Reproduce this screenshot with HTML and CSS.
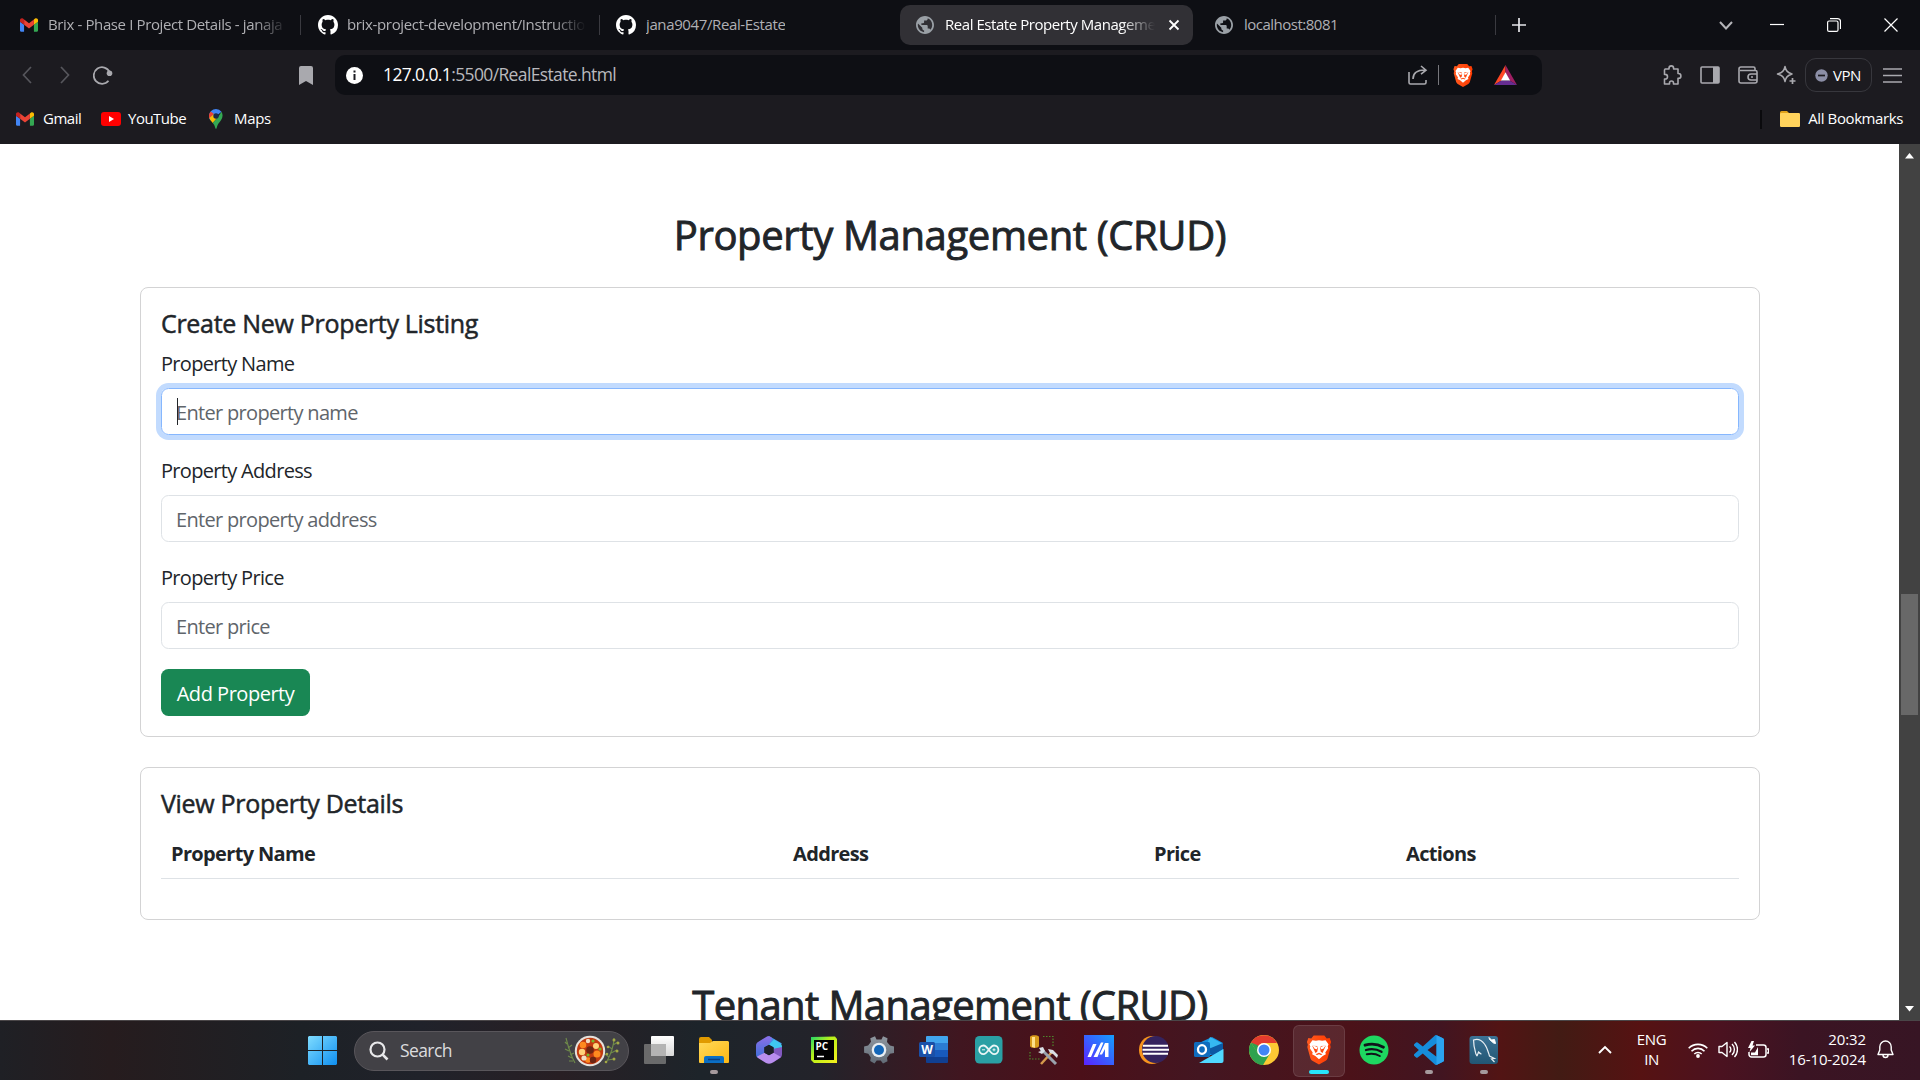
FILE: index.html
```html
<!DOCTYPE html>
<html lang="en">
<head>
<meta charset="utf-8">
<title>Real Estate Property Management</title>
<link rel="stylesheet" href="styles.css">
</head>
<body>
<svg class="defs" width="0" height="0" aria-hidden="true">
  <defs>
    <linearGradient id="g-win" x1="0" y1="0" x2="1" y2="1"><stop offset="0" stop-color="#7fdcff"/><stop offset="1" stop-color="#0f8ff0"/></linearGradient>
    <linearGradient id="g-ma" x1="0" y1="1" x2="1" y2="0"><stop offset="0" stop-color="#5a22ff"/><stop offset="1" stop-color="#14a0ff"/></linearGradient>
    <linearGradient id="g-folder" x1="0" y1="0" x2="1" y2="1"><stop offset="0" stop-color="#ffd95a"/><stop offset="1" stop-color="#fdb813"/></linearGradient>
    <linearGradient id="g-brave" x1="0" y1="0" x2="1" y2="0"><stop offset="0" stop-color="#ff5a1f"/><stop offset="1" stop-color="#ff3a00"/></linearGradient>
    <linearGradient id="g-pc" x1="0" y1="0" x2="1" y2="1"><stop offset="0" stop-color="#1fd76a"/><stop offset=".4" stop-color="#b6f01a"/><stop offset="1" stop-color="#f7f01d"/></linearGradient>
    <linearGradient id="g-gear" x1="0" y1="0" x2="0" y2="1"><stop offset="0" stop-color="#8f979f"/><stop offset="1" stop-color="#616b76"/></linearGradient>
    <linearGradient id="g-sql" x1="0" y1="0" x2="0" y2="1"><stop offset="0" stop-color="#3c7396"/><stop offset="1" stop-color="#225673"/></linearGradient>
    <linearGradient id="g-m1" x1="0" y1="0" x2="0" y2="1"><stop offset="0" stop-color="#8d6fe8"/><stop offset="1" stop-color="#3c6fd8"/></linearGradient>
    <linearGradient id="g-tv" x1="0" y1="0" x2="0" y2="1"><stop offset="0" stop-color="#fff"/><stop offset="1" stop-color="#d8d8d8"/></linearGradient>
    <symbol id="gmail" viewBox="52 42 88 66"><path fill="#4285f4" d="M58 108h14V74L52 59v43c0 3.32 2.69 6 6 6"/><path fill="#34a853" d="M120 108h14c3.32 0 6-2.69 6-6V59l-20 15"/><path fill="#fbbc04" d="M120 48v26l20-15v-8c0-7.42-8.47-11.65-14.4-7.2"/><path fill="#ea4335" d="M72 74V48l24 18 24-18v26L96 92"/><path fill="#c5221f" d="M52 51v8l20 15V48l-5.6-4.2c-5.94-4.45-14.4-.22-14.4 7.2"/></symbol>
    <symbol id="github" viewBox="0 0 16 16"><path fill="#fff" d="M8 0C3.58 0 0 3.58 0 8c0 3.54 2.29 6.53 5.47 7.59.4.07.55-.17.55-.38 0-.19-.01-.82-.01-1.49-2.01.37-2.53-.49-2.69-.94-.09-.23-.48-.94-.82-1.13-.28-.15-.68-.52-.01-.53.63-.01 1.08.58 1.23.82.72 1.21 1.87.87 2.33.66.07-.52.28-.87.51-1.07-1.78-.2-3.64-.89-3.64-3.95 0-.87.31-1.59.82-2.15-.08-.2-.36-1.02.08-2.12 0 0 .67-.21 2.2.82.64-.18 1.32-.27 2-.27.68 0 1.36.09 2 .27 1.53-1.04 2.2-.82 2.2-.82.44 1.1.16 1.92.08 2.12.51.56.82 1.27.82 2.15 0 3.07-1.87 3.75-3.65 3.95.29.25.54.73.54 1.48 0 1.07-.01 1.93-.01 2.2 0 .21.15.46.55.38A8.013 8.013 0 0016 8c0-4.42-3.58-8-8-8z"/></symbol>
    <symbol id="globe" viewBox="2 2 20 20"><path fill="#9aa0a6" d="M12 2C6.48 2 2 6.48 2 12s4.48 10 10 10 10-4.48 10-10S17.52 2 12 2zm-1 17.93c-3.95-.49-7-3.85-7-7.93 0-.62.08-1.21.21-1.79L9 15v1c0 1.1.9 2 2 2v1.93zm6.9-2.54c-.26-.81-1-1.39-1.9-1.39h-1v-3c0-.55-.45-1-1-1H8v-2h2c.55 0 1-.45 1-1V7h2c1.1 0 2-.9 2-2v-.41c2.93 1.19 5 4.06 5 7.41 0 2.08-.8 3.97-2.1 5.39z"/></symbol>
    <symbol id="brave" viewBox="0 0 26 30"><path fill="url(#g-brave)" d="M7.500 0h11L21 3l3-.3 1.500 4-1 2.800.6 2.500-3.200 11.500c-.4 1.200-1 1.800-2 2.500L13 30l-6.900-4c-1-.7-1.600-1.300-2-2.500L.9 12l.6-2.500-1-2.800 1.500-4L5 3z"/><path fill="#fff" d="M13 4.800l3.200.7 3.600-.5 3 4-.8 2.500.5 1.600-3 4.400.6 2-3.300 1.700L13 24.500l-3.800-3.300-3.300-1.700.6-2-3-4.400.5-1.600L3.200 9l3-4 3.600.5z"/><path fill="#ff4a12" d="M6 10.500l5 .3.900 2.200-.7 3.800-1.900 1.200-1-2.200zM20 10.500l-5 .3-.9 2.200.7 3.800 1.900 1.200 1-2.200zM9.500 19.300L13 17.800l3.500 1.500-3.500 2.200z"/><path fill="#fff" d="M6 10l5.500 2-.6 2.300-2.400-.6zM20 10l-5.500 2 .6 2.300 2.400-.6zM10.500 20.500l2.500-1.200 2.500 1.200L13 23z"/></symbol>
  </defs>
</svg>

<header class="browser">
  <div class="tabstrip">
    <div class="tab"><svg class="fav-gmail"><use href="#gmail"/></svg><span class="tab-title fade t1">Brix - Phase I Project Details - janaja</span></div>
    <div class="tab"><svg class="fav"><use href="#github"/></svg><span class="tab-title fade t2">brix-project-development/Instructio</span></div>
    <div class="tab last-before"><svg class="fav"><use href="#github"/></svg><span class="tab-title t3">jana9047/Real-Estate</span></div>
    <div class="tab active"><svg class="fav-globe"><use href="#globe"/></svg><span class="tab-title fade t4">Real Estate Property Manageme</span><svg class="tab-close" viewBox="0 0 12 12"><path d="M1.500 1.500l9 9M10.500 1.500l-9 9" stroke="#fff" stroke-width="1.800"/></svg></div>
    <div class="tab after"><svg class="fav-globe"><use href="#globe"/></svg><span class="tab-title t5">localhost:8081</span></div>
    <svg class="newtab" viewBox="0 0 14 14"><path d="M7 0v14M0 7h14" stroke="#e6e6ea" stroke-width="1.700"/></svg>
    <div class="winctl">
      <svg width="14" height="9" viewBox="0 0 14 9"><path d="M1 1l6 6.500L13 1" fill="none" stroke="#b4b4b8" stroke-width="2"/></svg>
      <svg width="14" height="14" viewBox="0 0 14 14"><path d="M0 6.500h14" stroke="#fff" stroke-width="1.200"/></svg>
      <svg width="14" height="14" viewBox="0 0 14 14"><rect x=".6" y="3" width="10.400" height="10.400" rx="1.500" fill="none" stroke="#fff" stroke-width="1.200"/><path d="M3 .6h7.500a3 3 0 0 1 3 3V11" fill="none" stroke="#fff" stroke-width="1.200"/></svg>
      <svg width="14" height="14" viewBox="0 0 14 14"><path d="M.5.5l13 13M13.500.5l-13 13" stroke="#fff" stroke-width="1.200"/></svg>
    </div>
  </div>

  <div class="toolbar">
    <div class="nav">
      <svg width="10" height="18" viewBox="0 0 10 18"><path d="M9 1L1.500 9 9 17" fill="none" stroke="#56565c" stroke-width="1.700"/></svg>
      <svg width="10" height="18" viewBox="0 0 10 18"><path d="M1 1l7.500 8L1 17" fill="none" stroke="#56565c" stroke-width="1.700"/></svg>
      <svg width="20" height="19" viewBox="0 0 20 19"><path d="M15.500 14.800A8.300 8.300 0 1 1 16.600 6" fill="none" stroke="#a9a9ae" stroke-width="1.800"/><circle cx="16.500" cy="7.300" r="2.800" fill="#a9a9ae"/></svg>
    </div>
    <svg class="bookmark" width="14" height="19" viewBox="0 0 14 19"><path d="M2 0h10a2 2 0 0 1 2 2v17l-7-4-7 4V2a2 2 0 0 1 2-2z" fill="#a9a9ae"/></svg>
    <div class="urlbar">
      <svg width="17" height="17" viewBox="0 0 17 17"><circle cx="8.500" cy="8.500" r="8.500" fill="#fff"/><path d="M7.500 3.500h2v2h-2zM7.500 7h2v6h-2z" fill="#1a1a20"/></svg>
      <span class="url"><b>127.0.0.1</b>:5500/RealEstate.html</span>
      <svg class="share" width="20" height="20" viewBox="0 0 20 20"><path d="M1 7v10.500a1.500 1.500 0 0 0 1.500 1.500h14a1.500 1.500 0 0 0 1.500-1.500V15M5 14c0-6 4-9 12-9M13 1l5 4.200-5 4" fill="none" stroke="#a9a9ae" stroke-width="1.600"/></svg>
      <i class="url-sep"></i>
      <svg class="shield" width="20" height="23"><use href="#brave"/></svg>
      <svg class="bat" width="23" height="20" viewBox="0 0 23 20"><path d="M11.500 0L0 20l7.500-4.500 4-8z" fill="#ff4724"/><path d="M11.500 0L23 20l-7.500-4.500-4-8z" fill="#9e1f63"/><path d="M0 20h23l-7.500-4.500h-8z" fill="#662d91"/><path d="M11.500 7.200l4.600 8.300H6.900z" fill="#fff"/></svg>
    </div>
    <div class="actions">
      <svg width="20" height="20" viewBox="0 0 20 20"><path d="M3 4h4V3.200a2.300 2.300 0 0 1 4.600 0V4H16v4.500h.5a2.400 2.400 0 0 1 0 4.800H16V19h-4.500v-1a2 2 0 0 0-4 0v1H2.500v-5h.7a2.300 2.300 0 0 0 0-4.600H2.500V5z" fill="none" stroke="#a9a9ae" stroke-width="1.600" stroke-linejoin="round"/></svg>
      <svg width="20" height="18" viewBox="0 0 20 18"><rect x="1" y="1" width="18" height="16" rx="1" fill="none" stroke="#a9a9ae" stroke-width="1.600"/><path d="M13 1h6v16h-6z" fill="#a9a9ae"/></svg>
      <svg width="20" height="18" viewBox="0 0 20 18"><path d="M17 4V2.500A1.500 1.500 0 0 0 15.500 1H3a2 2 0 0 0-2 2v12a2 2 0 0 0 2 2h14a2 2 0 0 0 2-2V6a1.500 1.500 0 0 0-1.500-1.500H2M19 8h-6a3 3 0 0 0 0 6h6M13 11h2" fill="none" stroke="#a9a9ae" stroke-width="1.600"/></svg>
      <svg width="20" height="20" viewBox="0 0 20 20"><path d="M9 1.500c1 4.500 2.500 6 7 7.500-4.500 1.500-6 3-7 7.500C8 12 6.500 10.500 1.500 9 6.500 7.500 8 6 9 1.500z" fill="none" stroke="#a9a9ae" stroke-width="1.500" stroke-linejoin="round"/><path d="M16.500 13v6M13.500 16h6" stroke="#a9a9ae" stroke-width="1.700"/></svg>
      <div class="vpn"><svg width="13" height="13" viewBox="0 0 13 13"><circle cx="6.500" cy="6.500" r="6.200" fill="#8b8ea6"/><path d="M3 6.500h7" stroke="#1c1b20" stroke-width="1.700"/></svg><span>VPN</span></div>
      <svg class="burger" width="19" height="15" viewBox="0 0 19 15"><path d="M0 1h19M0 7.500h19M0 14h19" stroke="#a9a9ae" stroke-width="1.500"/></svg>
    </div>
  </div>

  <div class="bookmarks">
    <a class="bm b1"><svg width="18" height="14"><use href="#gmail"/></svg><span>Gmail</span></a>
    <a class="bm b2"><svg width="20" height="14" viewBox="0 0 20 14"><rect width="20" height="14" rx="3" fill="#f00"/><path d="M8 4l5 3-5 3z" fill="#fff"/></svg><span>YouTube</span></a>
    <a class="bm b3"><svg width="14" height="20" viewBox="0 0 14 20"><path d="M7 0a7 7 0 0 0-7 7c0 1.700.6 3.200 1.500 4.500L12.500 2.700A7 7 0 0 0 7 0z" fill="#4285f4"/><path d="M1.700 2.500A7 7 0 0 0 .4 9.500L5 5z" fill="#ea4335"/><path d="M.4 9c.6 1.700 2 3.300 3.300 5L9 8 5.500 4.800z" fill="#fbbc04"/><path d="M12.500 2.700C15.500 8 11.500 12 9.500 14.500 8 16.500 7.800 20 7 20s-1-3.800-3.300-6l5-5.500z" fill="#34a853"/><circle cx="7" cy="7" r="2.700" fill="#1c2b48"/></svg><span>Maps</span></a>
    <div class="allbm"><i></i><svg width="20" height="16" viewBox="0 0 20 16"><path d="M0 1.500A1.500 1.500 0 0 1 1.500 0H7l2 2v3H0z" fill="#e0a21a"/><rect y="2" width="20" height="14" rx="1.200" fill="#ffd35c"/></svg><span>All Bookmarks</span></div>
  </div>
</header>

<div class="viewport">
  <main class="page">
    <h2 class="heading">Property Management (CRUD)</h2>
    <section class="card">
      <h5>Create New Property Listing</h5>
      <form>
        <label>Property Name</label>
        <div class="control focused"><i class="caret"></i><span>Enter property name</span></div>
        <label>Property Address</label>
        <div class="control"><span>Enter property address</span></div>
        <label>Property Price</label>
        <div class="control"><span>Enter price</span></div>
        <div class="btn">Add Property</div>
      </form>
    </section>
    <section class="card">
      <h5>View Property Details</h5>
      <table>
        <colgroup><col class="c1"><col class="c2"><col class="c3"><col class="c4"></colgroup>
        <thead><tr><th>Property Name</th><th>Address</th><th>Price</th><th>Actions</th></tr></thead>
      </table>
    </section>
    <h2 class="heading next">Tenant Management (CRUD)</h2>
  </main>
  <div class="scrollbar">
    <svg width="9" height="6" viewBox="0 0 9 6"><path d="M4.500 0L9 5.500H0z" fill="#fff"/></svg>
    <i class="thumb"></i>
    <svg width="9" height="6" viewBox="0 0 9 6"><path d="M4.500 5.500L9 0H0z" fill="#fff"/></svg>
  </div>
</div>

<footer class="taskbar">
  <svg class="start" width="29" height="29" viewBox="0 0 29 29"><path d="M1 0h13v14H0V1zM15 0h13l1 1v13H15zM0 15h14v14H1l-1-1zM15 15h14v13l-1 1H15z" fill="url(#g-win)"/></svg>
  <div class="search">
    <svg width="20" height="20" viewBox="0 0 20 20"><circle cx="8.500" cy="8.500" r="7" fill="none" stroke="#e8e8ea" stroke-width="2.200"/><path d="M13.700 13.700l4.800 4.800" stroke="#e8e8ea" stroke-width="2.600"/></svg>
    <span>Search</span>
    <svg class="food" width="56" height="32" viewBox="0 0 56 32">
      <g fill="none" stroke="#6f8a4a" stroke-width="1.100"><path d="M2 3c2 8 4 16 9 25M3 9l-2-2M4 13l4-3M5 16l-4-2M6 20l4-2M8 23l-4-2M9 26l-4 0"/><path d="M50 3c0 8-3 16-8 25M49 10l5-3M48 14l-4-3M47 18l6-3M45 22l-4-3M44 25l6-1"/></g>
      <g fill="#a3a944"><circle cx="50" cy="5" r="1.500"/><circle cx="54" cy="8" r="1.500"/><circle cx="44" cy="12" r="1.300"/><circle cx="53" cy="16" r="1.500"/><circle cx="43" cy="19" r="1.300"/><circle cx="50" cy="24" r="1.500"/><circle cx="42" cy="27" r="1.300"/></g>
      <circle cx="26" cy="16" r="15.200" fill="#e6e2dc"/><circle cx="26" cy="16" r="13.200" fill="#c23a10"/>
      <g fill="#ff8a1f"><circle cx="19" cy="10" r="3.300"/><circle cx="33" cy="19" r="3.500"/><circle cx="24" cy="25" r="2.800"/></g>
      <g fill="#ffd27a"><circle cx="32" cy="11" r="3"/><circle cx="18" cy="17" r="3.200"/></g>
      <g fill="#6d2512"><circle cx="26" cy="15" r="3.800"/><circle cx="29" cy="25" r="3.200"/></g>
      <g fill="#f1dfc4"><circle cx="24" cy="6" r="2.200"/><circle cx="20" cy="23" r="2.600"/></g>
      <g fill="#78b92b"><circle cx="29" cy="6" r="1.600"/><circle cx="36" cy="14" r="1.600"/><circle cx="24" cy="20" r="1.500"/></g>
    </svg>
  </div>
  <div class="apps">
    <div class="app"><svg viewBox="0 0 30 30"><rect x="7" y="1" width="23" height="20" rx="1" fill="url(#g-tv)"/><rect y="9" width="22" height="20" rx="1" fill="#777" fill-opacity=".85"/><rect x="7" y="9" width="15" height="12" fill="#b4b4b4"/></svg></div>
    <div class="app run"><svg viewBox="0 0 30 30"><path d="M0 4a2 2 0 0 1 2-2h8l3 3v6H0z" fill="#e09a00"/><path d="M0 8h11l3-2h15l1 1v20a1 1 0 0 1-1 1H1a1 1 0 0 1-1-1z" fill="url(#g-folder)"/><path d="M5 28v-5a2 2 0 0 1 2-2h16a2 2 0 0 1 2 2v5z" fill="#0b6fc4"/><path d="M9 24.500h12" stroke="#0a3f80" stroke-width="1.500"/></svg></div>
    <div class="app"><svg viewBox="0 0 30 30"><path d="M15 1L28 8.500 20 13l-5-3.300-4.600 2.600L8 6z" fill="#4a8fe8"/><path d="M20 4.500L26 8c1.500 1 2 2 2 4v7.500l-8.400-4v-3.200L15 9.700z" fill="#3fc8f0"/><path d="M28 12v7c0 2-.6 3-2 4l-7 4.500-4-7.200 4.600-2.600v-4z" fill="#8259c0"/><path d="M13 1.500L4 7C2.500 8 2 9 2 11v8c0 2 .6 3 2 4l6.400-5.300v-5.400L15 9.700 18 3c-1.600-1.500-3.400-2.300-5-1.500z" fill="url(#g-m1)"/><path d="M3 21.500l7.400-3.800 4.600 2.600 4.600-2.600L27 22l-9 6c-2 1-4 1-6 0l-8-5z" fill="#b98eee"/><path d="M15 9.700l4.600 2.600v5.400L15 20.300l-4.600-2.600v-5.400z" fill="#1d2129"/></svg></div>
    <div class="app"><svg viewBox="0 0 30 30"><path d="M2 2l24-.5L28 4v24L5 28l-3-3z" fill="url(#g-pc)"/><rect x="5" y="5" width="20" height="20" fill="#000"/><text x="6.500" y="15" class="pc-text">PC</text><path d="M8 21.500h7" stroke="#fff" stroke-width="1.500"/></svg></div>
    <div class="app"><svg viewBox="0 0 30 30"><path d="M11 1.200l1.500 3.300h5L19 1.200l4.500 2L23 7l3 3.600 4 .8v6.500l-4 .8-3 4 .5 3.600-4.500 2.200-2.300-3h-4L10.500 28.500 6.200 26l.6-3.600-2.500-3.700-4.200-1V11.500l4-1L7 6.800 6.300 3.300z" fill="url(#g-gear)"/><circle cx="15" cy="15" r="7.300" fill="#e8eef2"/><circle cx="15" cy="15" r="5" fill="#1266b8"/></svg></div>
    <div class="app"><svg viewBox="0 0 30 30"><path d="M7 2a1 1 0 0 1 1-1h20a1 1 0 0 1 1 1v6H7z" fill="#41a5ee"/><path d="M7 8h22v7H7z" fill="#2b7cd3"/><path d="M7 15h22v7H7z" fill="#185abd"/><path d="M7 22h22v5a1 1 0 0 1-1 1H8a1 1 0 0 1-1-1z" fill="#103f91"/><rect y="7" width="16" height="15" rx="1.500" fill="#1a50a8"/><text x="2.200" y="19" class="w-text">W</text></svg></div>
    <div class="app"><svg viewBox="0 0 30 30"><rect x="1" y="1" width="27.500" height="27.500" rx="4.500" fill="#2aa0a4"/><g fill="none" stroke="#eaf6f6" stroke-width="1.800"><path d="M14.800 14.800C12.500 11.500 11.500 10.500 9.500 10.500a4.300 4.300 0 0 0 0 8.600c2 0 3-1 5.300-4.300s3.300-4.300 5.300-4.300a4.300 4.300 0 0 1 0 8.600c-2 0-3-1-5.300-4.300z"/></g><path d="M8 14.800h3M18.500 14.800h3M20 13.300v3" stroke="#eaf6f6"/></svg></div>
    <div class="app"><svg viewBox="0 0 30 30"><path d="M1 2c0-2.500 9-2.500 9 0v9c0 2.500-9 2.500-9 0z" fill="#d99b1c"/><path d="M3 2v10l3 .7V2z" fill="#ffe08a"/><path d="M14 1.500h10V11M1 17v7h10" fill="none" stroke="#4d8a2c" stroke-width="1.200" stroke-dasharray="1.500 1.500"/><path d="M12 29l11-12" stroke="#d69a4c" stroke-width="2.500"/><path d="M12 14l15 15" stroke="#9aa3ad" stroke-width="3"/><path d="M19 14l5 1 5 5-1 3-4-4-3-1zM10 13l4-1 2 4-3 3-4-2 3-1z" fill="#d9dfe5"/></svg></div>
    <div class="app"><svg viewBox="0 0 30 30"><rect width="30" height="30" fill="url(#g-ma)"/><path d="M3.500 22L9 9h3.500L7 22zM9.500 22L17 7.500h2.500L13.500 22zM15.500 19.500L21 8h3.500v14H21v-8l-3 5.500z" fill="#fff"/></svg></div>
    <div class="app"><svg viewBox="0 0 30 30"><ellipse cx="13" cy="15" rx="13" ry="14" fill="#f7941e"/><circle cx="16.500" cy="14.500" r="13.500" fill="#35235e"/><path d="M4 10.800h25M3.500 14.800h26.500M4 18.800h25" stroke="#fff" stroke-width="2"/></svg></div>
    <div class="app"><svg viewBox="0 0 30 30"><path d="M5 8l13-6 11 6v12H5z" fill="#1490df"/><path d="M16 2l13 7-7 6-10-4z" fill="#35b8f1"/><path d="M12 15l17-7v6l-10 7z" fill="#0c59a4"/><path d="M5 28l24.500-14v12a2 2 0 0 1-2 2z" fill="#50d9ff"/><rect y="7" width="16" height="15" rx="1.500" fill="#0f6cbd"/><ellipse cx="8" cy="14.500" rx="4" ry="4.300" fill="none" stroke="#fff" stroke-width="2.300"/></svg></div>
    <div class="app"><svg viewBox="0 0 30 30"><circle cx="15" cy="15" r="15" fill="#fcc934"/><path d="M2 7.500A15 15 0 0 0 14 30l7-11.500H9z" fill="#2ea24e"/><path d="M2 7.500A15 15 0 0 1 28 8H15c-4 0-6.500 3-7 6.500z" fill="#e33b2e"/><path d="M2 7.500L9 19l4-5-5-4z" fill="#2ea24e"/><circle cx="15" cy="15" r="7" fill="#fff"/><circle cx="15" cy="15" r="5.500" fill="#4285f4"/></svg></div>
    <div class="app current"><svg viewBox="0 0 26 31"><use href="#brave"/></svg></div>
    <div class="app"><svg viewBox="0 0 30 30"><circle cx="15" cy="15" r="14.500" fill="#1ed760"/><g fill="none" stroke="#10131a" stroke-linecap="round"><path d="M6 10.200c6-1.700 13-1 18.500 2" stroke-width="2.800"/><path d="M7 15c5.500-1.500 11-.8 15.500 1.800" stroke-width="2.300"/><path d="M7.800 19.300c4.500-1 9-.6 13 1.700" stroke-width="2"/></g></svg></div>
    <div class="app run"><svg viewBox="0 0 24 24"><path fill="#168ddb" d="M23.150 2.587L18.210.21a1.494 1.494 0 0 0-1.705.29l-9.460 8.630-4.120-3.128a.999.999 0 0 0-1.276.057L.327 7.261A1 1 0 0 0 .326 8.740L3.899 12 .326 15.260a1 1 0 0 0 .001 1.479L1.650 17.940a.999.999 0 0 0 1.276.057l4.120-3.128 9.460 8.630a1.492 1.492 0 0 0 1.704.290l4.942-2.377A1.500 1.500 0 0 0 24 20.060V3.939a1.500 1.500 0 0 0-.850-1.352zm-5.146 14.861L10.826 12l7.178-5.448v10.896z"/><path d="M18 .1l5.200 2.500a1.500 1.500 0 0 1 .8 1.300v16.200a1.500 1.500 0 0 1-.8 1.300L18 23.900z" fill="#2ba4f0"/></svg></div>
    <div class="app run"><svg viewBox="0 0 30 30"><rect x=".5" y="1" width="28.500" height="28" rx="3" fill="url(#g-sql)"/><path d="M8 21c-2-2-1.500-5-2.500-8S5 7 4.500 5c4-1.500 8 0 11 4s4 9 5 12l5 2.500-3 .5 3 3M8 21l1.500-4c1 1 2 2 3 2" fill="none" stroke="#e8eef2" stroke-width="1.200"/><path d="M20 2.500l2.500 2.500 3-.5 1 4-2-.5-4-3.500z" fill="#fff" stroke="#fff"/></svg></div>
  </div>
  <div class="tray">
    <svg class="chev" width="14" height="9" viewBox="0 0 14 9"><path d="M1 8l6-6 6 6" fill="none" stroke="#fff" stroke-width="1.900"/></svg>
    <div class="lang"><span>ENG</span><span>IN</span></div>
    <svg width="20" height="16" viewBox="0 0 20 16"><g fill="none" stroke="#fff" stroke-width="1.600"><path d="M.7 6.300a13 13 0 0 1 18.600 0M3.500 9.200a9 9 0 0 1 13 0M6.300 12a5.300 5.300 0 0 1 7.400 0"/></g><circle cx="10" cy="14" r="1.900" fill="#fff"/></svg>
    <svg class="spk" width="20" height="17" viewBox="0 0 20 17"><path d="M1 5.500h3L9 1.500v14l-5-4H1z" fill="none" stroke="#fff" stroke-width="1.400" stroke-linejoin="round"/><path d="M11.500 5.500a4 4 0 0 1 0 6M14 3a7.500 7.500 0 0 1 0 11M16.500 1a11 11 0 0 1 0 15" fill="none" stroke="#fff" stroke-width="1.400"/></svg>
    <svg class="batt" width="21" height="18" viewBox="0 0 21 18"><path d="M8 4h7.500a2.500 2.500 0 0 1 2.500 2.500v7a2.500 2.500 0 0 1-2.500 2.500h-12A2.500 2.500 0 0 1 1 13.500V11M19 8h1.500v4H19" fill="none" stroke="#fff" stroke-width="1.500"/><path d="M3 14.200V11.500h4l3-5.500v8.200zM3.500 0L0 7h2.500L1.500 11 7 4.500H4.500L6 0z" fill="#fff"/></svg>
    <div class="clock"><span>20:32</span><span class="date">16-10-2024</span></div>
    <svg class="bell" width="17" height="19" viewBox="0 0 17 19"><path d="M8.500 1a5.700 5.700 0 0 0-5.700 5.700V10L1 14.500h15L14.200 10V6.700A5.700 5.700 0 0 0 8.500 1zM6 15a2.500 2.500 0 0 0 5 0" fill="none" stroke="#fff" stroke-width="1.400" stroke-linejoin="round"/></svg>
  </div>
</footer>
</body>
</html>
```

FILE: styles.css
```css
* { box-sizing: border-box; }
html, body { margin: 0; height: 100%; overflow: hidden; }
body {
  display: flex; flex-direction: column;
  width: 1920px; height: 1080px;
  font-family: "Open Sans", "Noto Sans", sans-serif;
  font-size: 20px; line-height: 1.5; color: #212529; background: #fff;
}
svg { display: block; flex: none; }
.defs { position: absolute; }
span { white-space: nowrap; }

/* browser chrome */
.browser { flex: none; height: 144px; background: #1c1b20; color: #fff; font-size: 15px; line-height: 20px; }
.browser span { padding-bottom: 2px; }
.tabstrip { display: flex; align-items: center; height: 50px; background: #0e0f14; }
.tab { display: flex; align-items: center; width: 299px; height: 20px; padding-left: 17px; border-right: 1px solid #3a3a40; color: #b0b0b4; }
.tab:first-child { width: 301px; padding-left: 20px; }
.tab-title { overflow: hidden; margin-left: 10px; letter-spacing: -.38px; }
.fade { -webkit-mask-image: linear-gradient(90deg, #000 calc(100% - 34px), transparent); mask-image: linear-gradient(90deg, #000 calc(100% - 34px), transparent); }
.fav { width: 20px; height: 20px; }
.fav-gmail { width: 18px; height: 14px; }
.fav-globe { width: 18px; height: 18px; }
.t1 { width: 240px; margin-left: 10px; }
.t2 { width: 239px; margin-left: 9px; letter-spacing: -.35px; }
.t4 { width: 210px; letter-spacing: -.45px; }
.tab.last-before { width: 300px; border: 0; padding-left: 16px; }
.tab.active { width: 293px; height: 40px; border: 0; border-radius: 10px; background: #313035; color: #fff; padding-left: 16px; }
.tab.active .tab-title { margin-left: 11px; }
.tab-close { width: 12px; height: 12px; margin-left: 13px; }
.tab.after { width: 303px; padding-left: 22px; }
.tab.after .tab-title { margin-left: 11px; letter-spacing: -.5px; }
.newtab { width: 14px; height: 14px; margin-left: 16px; }
.winctl { display: flex; align-items: center; margin-left: auto; padding-right: 22px; gap: 43px; }
.winctl svg:first-child { margin-right: -6px; }

.toolbar { display: flex; align-items: center; height: 50px; }
.nav { display: flex; align-items: center; gap: 28px; padding-left: 22px; }
.nav svg:last-child { margin-left: -5px; }
.bookmark { margin-left: 186px; }
.urlbar { display: flex; align-items: center; width: 1207px; height: 40px; margin-left: 22px; padding-left: 11px; border-radius: 10px; background: #0e0f14; }
.url { margin-left: 20px; font-size: 17.500px; color: #b9b9bd; letter-spacing: -.63px; }
.url b { font-weight: 400; color: #fff; }
.share { margin-left: auto; }
.url-sep { width: 1px; height: 20px; margin-left: 10px; background: #77777c; }
.shield { margin-left: 14px; }
.bat { margin: 0 25px 0 21px; }
.actions { display: flex; align-items: center; gap: 18px; margin-left: auto; padding-right: 18px; }
.vpn { display: flex; align-items: center; gap: 5px; width: 67px; height: 34px; margin-left: -9px; padding-left: 9px; border: 1px solid #37373d; border-radius: 11px; letter-spacing: -.5px; }
.vpn span { padding: 0; }
.burger { margin-left: -7px; }

.bookmarks { display: flex; align-items: center; height: 38px; padding-left: 16px; }
.bm { display: flex; align-items: center; gap: 9px; letter-spacing: -.5px; }
.b1 { width: 85px; }
.b2 { width: 108px; gap: 7px; }
.b3 { gap: 11px; letter-spacing: -.3px; }
.allbm { display: flex; align-items: center; margin-left: auto; padding-right: 17px; letter-spacing: -.4px; }
.allbm i { width: 2px; height: 19px; margin-right: 18px; background: #0a0a0d; }
.allbm svg { margin-right: 8px; }

/* page */
.viewport { display: flex; height: 876px; overflow: hidden; }
.page { width: 1899px; padding: 67px 139px 0 140px; overflow: hidden; }
.heading { margin: 0 0 28px; font-size: 40px; line-height: 48px; font-weight: 400; text-align: center; letter-spacing: -.36px; -webkit-text-stroke: .9px #212529; }
.heading.next { margin-top: 61px; letter-spacing: -.6px; }
.card { margin-bottom: 30px; padding: 20px; border: 1px solid #d3d3d4; border-radius: 8px; }
h5 { margin: 0 0 10px; font-size: 25px; line-height: 30px; font-weight: 400; letter-spacing: -.3px; -webkit-text-stroke: .5px #212529; }
label { display: block; height: 30px; margin-bottom: 10px; padding-top: 1px; letter-spacing: -.68px; }
.control { position: relative; display: flex; align-items: center; height: 47px; margin-bottom: 20px; padding: 3px 15px 0 14px; border: 1px solid #dee2e6; border-radius: 7.500px; color: #5f656b; letter-spacing: -.68px; }
.control.focused { border-color: #86b7fe; box-shadow: 0 0 0 5px #c2dbfe; }
.caret { position: absolute; left: 15px; top: 9px; width: 1px; height: 27px; background: #212529; }
.btn { width: 149px; height: 47px; padding-top: 1px; border-radius: 7.500px; background: #198754; color: #fff; line-height: 47px; text-align: center; letter-spacing: -.48px; }
table { width: 1578px; margin-bottom: 20px; border-collapse: separate; border-spacing: 0; table-layout: fixed; }
.c1 { width: 622px; }
.c2 { width: 361px; }
.c3 { width: 252px; }
th { height: 51px; padding: 11px 10px 9px; border-bottom: 1px solid #dee2e6; text-align: left; font-weight: 700; letter-spacing: -.65px; }
.scrollbar { display: flex; flex-direction: column; align-items: center; width: 21px; padding: 9px 0 8px; background: #424242; }
.thumb { width: 17px; height: 121px; margin: 435px 0 auto; background: #686868; }

/* taskbar */
.taskbar {
  display: flex; align-items: center; height: 60px; border-top: 1px solid #4a4648; color: #fff;
  background: linear-gradient(90deg, #1f2025 0, #261c1e 110px, #1d2126 300px, #20222a 420px, #281f24 560px, #1d242a 700px, #23232a 820px, #401620 960px, #4b1019 1080px, #431621 1200px, #4b1219 1350px, #411521 1440px, #521414 1500px, #421b14 1560px, #561212 1640px, #4b1220 1720px, #3b1423 1800px, #371524 1920px);
}
.start { margin-left: 308px; }
.search { display: flex; align-items: center; width: 275px; height: 40px; margin-left: 17px; padding-left: 14px; border: 1px solid #59565b; border-radius: 20px; background: #424146; font-size: 17.500px; color: #dcdcde; }
.search span { margin-left: 11px; letter-spacing: -.6px; }
.food { margin: 0 8px 0 auto; }
.apps { display: flex; margin: -1px 0 0 2px; }
.app { position: relative; display: flex; align-items: center; justify-content: center; width: 55px; height: 50px; }
.app svg { width: 30px; height: 30px; }
.run::after { content: ""; position: absolute; bottom: 1px; left: 24px; width: 8px; height: 4px; border-radius: 2px; background: #a59a9d; }
.current::before { content: ""; position: absolute; left: 2px; top: 0; width: 50px; height: 50px; border: 1px solid rgba(255,255,255,.1); border-radius: 6px; background: rgba(255,255,255,.09); }
.current svg { position: relative; }
.current::after { content: ""; position: absolute; bottom: 1px; left: 18px; width: 20px; height: 4px; border-radius: 2px; background: #27e4fa; }
.pc-text { font: 700 10px "Open Sans", sans-serif; fill: #fff; }
.w-text { font: 700 12px "Open Sans", sans-serif; fill: #fff; }
.tray { display: flex; align-items: center; margin: -2px 0 0 auto; padding-right: 26px; font-size: 15px; line-height: 20px; }
.lang { display: flex; flex-direction: column; align-items: center; width: 35px; margin: -2px 19px 0 22px; letter-spacing: -.4px; }
.spk { margin-left: 10px; }
.batt { margin-left: 10px; }
.clock { display: flex; flex-direction: column; align-items: flex-end; width: 80px; margin: -2px 0 0 17px; letter-spacing: -.1px; }
.bell { margin-left: 11px; }
```
